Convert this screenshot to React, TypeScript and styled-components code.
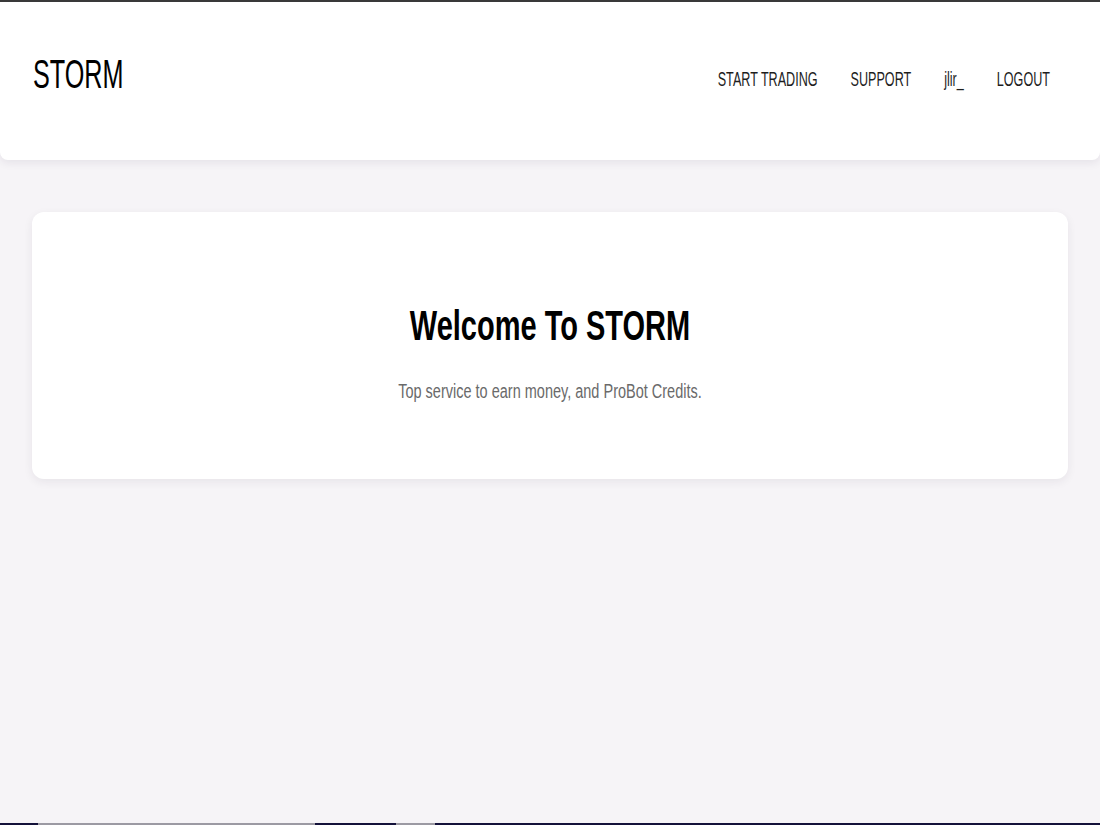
import React from "react";
import styled, { createGlobalStyle } from "styled-components";

const GlobalStyle = createGlobalStyle`
  html, body {
    margin: 0;
    padding: 0;
    background: #f6f4f7;
    font-family: "Liberation Sans", Arial, sans-serif;
  }
  * { box-sizing: border-box; }
`;

const Page = styled.div`
  display: flex;
  flex-direction: column;
  min-height: 100vh;
  border-top: 2px solid #3a3a3a;
`;

const Header = styled.header`
  height: 158px;
  flex: none;
  display: flex;
  align-items: flex-start;
  justify-content: space-between;
  padding: 0 50px 0 33px;
  background: #ffffff;
  border-radius: 0 0 8px 8px;
  box-shadow: 0 3px 8px rgba(40, 30, 60, 0.08);
`;

/* The reference text is drawn tall and narrow: a smaller font for true widths,
   stretched vertically to the visible cap height. */
const Stretched = styled.span<{ $size: number; $line: number; $stretch: number }>`
  display: inline-block;
  font-size: ${(p) => p.$size}px;
  line-height: ${(p) => p.$line}px;
  transform: scaleY(${(p) => p.$stretch});
  transform-origin: center;
  white-space: nowrap;
`;

const Logo = styled.div`
  margin-top: 48px;
  color: #000;
  font-weight: 400;
`;

const Nav = styled.nav`
  margin-top: 63px;
  display: flex;
  align-items: center;
  gap: 33px;
`;

const NavLink = styled.a`
  color: #1e1e1e;
  text-decoration: none;
  cursor: pointer;
`;

const Main = styled.main`
  flex: 1;
  padding: 52px 32px 0;
`;

const Card = styled.section`
  display: flex;
  flex-direction: column;
  align-items: center;
  padding: 88px 0 73px;
  background: #ffffff;
  border-radius: 12px;
  box-shadow: 0 3px 10px rgba(40, 30, 60, 0.07);
`;

const Title = styled.h1`
  margin: 0;
  color: #000;
  font-weight: 700;
`;

const Subtitle = styled.p`
  margin: 26px 0 0;
  color: #6a6a6a;
  font-weight: 400;
`;

const ProgressBar = styled.div`
  display: flex;
  height: 2px;
  flex: none;
  background: #14123a;
`;

const Segment = styled.div<{ $w: number; $filled?: boolean }>`
  width: ${(p) => p.$w}px;
  background: ${(p) => (p.$filled ? "#9c9aa3" : "transparent")};
`;

const navItems = ["START TRADING", "SUPPORT", "jlir_", "LOGOUT"];

export default function App() {
  return (
    <>
      <GlobalStyle />
      <Page>
        <Header>
          <Logo>
            <Stretched $size={25.2} $line={48} $stretch={1.61}>
              STORM
            </Stretched>
          </Logo>
          <Nav>
            {navItems.map((item) => (
              <NavLink key={item}>
                <Stretched $size={12.6} $line={30} $stretch={1.62}>
                  {item}
                </Stretched>
              </NavLink>
            ))}
          </Nav>
        </Header>
        <Main>
          <Card>
            <Title>
              <Stretched $size={29} $line={50} $stretch={1.48}>
                Welcome To STORM
              </Stretched>
            </Title>
            <Subtitle>
              <Stretched $size={14.5} $line={30} $stretch={1.45}>
                Top service to earn money, and ProBot Credits.
              </Stretched>
            </Subtitle>
          </Card>
        </Main>
        <ProgressBar>
          <Segment $w={38} />
          <Segment $w={277} $filled />
          <Segment $w={81} />
          <Segment $w={39} $filled />
        </ProgressBar>
      </Page>
    </>
  );
}
